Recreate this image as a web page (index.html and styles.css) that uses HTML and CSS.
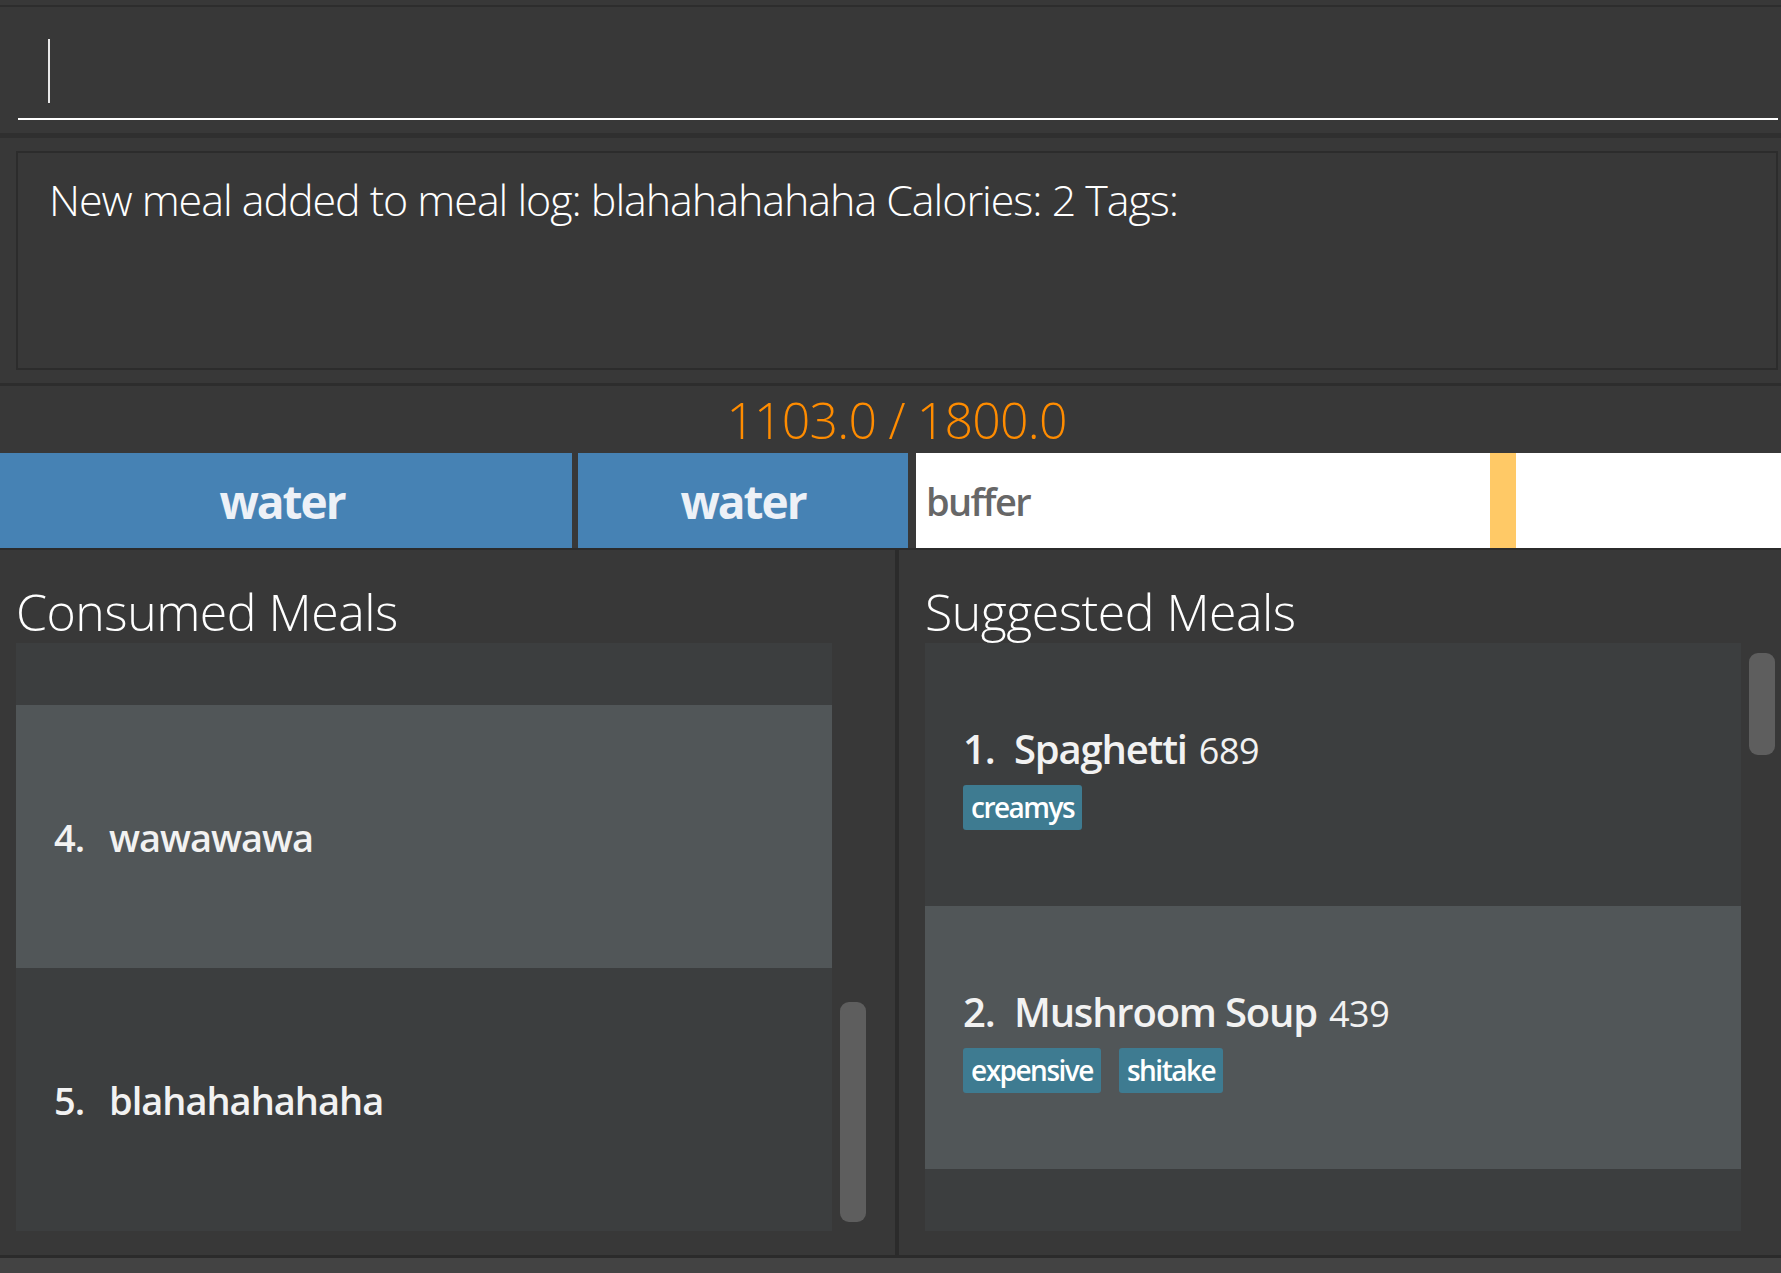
FILE: index.html
```html
<!DOCTYPE html>
<html lang="en">
<head>
<meta charset="utf-8">
<title>Meal log</title>
<link rel="stylesheet" href="styles.css">
</head>
<body>
<div class="app">
  <div class="command-pane">
    <div class="command-field"><span class="caret"></span></div>
  </div>
  <div class="result-pane">
    <div class="result-box">New meal added to meal log: blahahahahaha Calories: 2 Tags:</div>
  </div>
  <div class="calorie-pane"><span class="calorie-text">1103.0 / 1800.0</span></div>
  <div class="bar">
    <div class="seg seg-meal seg-first">water</div>
    <div class="seg seg-meal seg-second">water</div>
    <div class="seg seg-buffer">
      <span class="buffer-label">buffer</span>
      <span class="buffer-marker"></span>
      <span class="buffer-rest"></span>
    </div>
  </div>
  <div class="panels">
    <section class="panel panel-left">
      <h2 class="panel-title">Consumed Meals</h2>
      <div class="list-wrap">
        <div class="list list-consumed">
          <div class="cell cell-even cell-partial"></div>
          <div class="cell cell-odd">
            <div class="cell-title"><span class="cell-idx">4.</span><span class="cell-name">wawawawa</span></div>
          </div>
          <div class="cell cell-even">
            <div class="cell-title"><span class="cell-idx">5.</span><span class="cell-name">blahahahahaha</span></div>
          </div>
        </div>
        <div class="scrollbar"><div class="thumb thumb-left"></div></div>
      </div>
    </section>
    <div class="divider"></div>
    <section class="panel panel-right">
      <h2 class="panel-title">Suggested Meals</h2>
      <div class="list-wrap">
        <div class="list list-suggested">
          <div class="cell cell-even cell-card">
            <div class="cell-body">
              <div class="cell-title"><span class="cell-idx">1.</span><span class="cell-name">Spaghetti</span><span class="cell-cal">689</span></div>
              <div class="tags"><span class="tag">creamys</span></div>
            </div>
          </div>
          <div class="cell cell-odd cell-card">
            <div class="cell-body">
              <div class="cell-title"><span class="cell-idx">2.</span><span class="cell-name">Mushroom Soup</span><span class="cell-cal">439</span></div>
              <div class="tags"><span class="tag">expensive</span><span class="tag">shitake</span></div>
            </div>
          </div>
          <div class="cell cell-even cell-partial"></div>
        </div>
        <div class="scrollbar"><div class="thumb thumb-right"></div></div>
      </div>
    </section>
  </div>
  <div class="status"></div>
</div>
</body>
</html>
```
FILE: styles.css
```css
* { box-sizing: border-box; }

html, body {
  margin: 0;
  padding: 0;
  background: #383838;
}

body {
  font-family: "Open Sans", "Noto Sans", "Liberation Sans", sans-serif;
  color: #ffffff;
  width: 1781px;
  height: 1273px;
  overflow: hidden;
}

.app {
  display: flex;
  flex-direction: column;
  height: 1273px;
  padding-top: 5px;
}

/* command box */
.command-pane {
  height: 133px;
  flex: none;
  border-top: 2px solid #2d2d2d;
  border-bottom: 5px solid #2f2f2f;
  padding: 0 3px 0 18px;
}

.command-field {
  height: 113px;
  border-bottom: 2px solid #ffffff;
  padding: 32px 0 0 30px;
}

.caret {
  display: block;
  width: 2px;
  height: 64px;
  background: #e8e8e8;
}

/* result display */
.result-pane {
  height: 248px;
  flex: none;
  padding: 13px 3px 0 16px;
  border-bottom: 3px solid #2d2d2d;
}

.result-box {
  height: 219px;
  border: 2px solid #2c2c2c;
  padding: 21px 20px 0 31px;
  font-weight: 300;
  font-size: 43px;
  line-height: 1.2;
  letter-spacing: -1.05px;
  color: #ffffff;
}

/* calorie summary */
.calorie-pane {
  height: 67px;
  flex: none;
  text-align: center;
  padding-top: 1px;
}

.calorie-text {
  font-weight: 300;
  font-size: 50px;
  line-height: 66px;
  letter-spacing: -0.8px;
  color: #ff8c00;
  padding-left: 12px;
}

/* stacked calorie bar */
.bar {
  display: flex;
  height: 97px;
  flex: none;
  border-bottom: 2px solid #2b2b2b;
}

.seg {
  height: 95px;
  display: flex;
  align-items: center;
}

.seg-meal {
  background: #4682b4;
  justify-content: center;
  font-weight: 700;
  font-size: 46px;
  letter-spacing: -2px;
  color: #edf1f7;
}

.seg-first {
  width: 572px;
  margin-right: 6px;
  padding-right: 8px;
}

.seg-second {
  width: 330px;
  margin-right: 8px;
}

.seg-buffer {
  flex: 1;
  background: #ffffff;
  align-items: stretch;
}

.buffer-label {
  flex: 1;
  display: flex;
  align-items: center;
  padding-left: 10px;
  font-size: 38px;
  font-weight: 600;
  letter-spacing: -1.6px;
  color: #676767;
}

.buffer-marker {
  width: 26px;
  background: #ffc966;
}

.buffer-rest {
  width: 265px;
}

/* meal panels */
.panels {
  display: flex;
  height: 705px;
  flex: none;
}

.panel {
  display: flex;
  flex-direction: column;
}

.panel-left {
  width: 895px;
  padding-left: 16px;
}

.divider {
  width: 4px;
  background: #2b2b2b;
}

.panel-right {
  flex: 1;
  padding-left: 26px;
}

.panel-title {
  margin: 37px 0 6px 0;
  font-size: 50px;
  font-weight: 300;
  line-height: 50px;
  letter-spacing: -0.5px;
  color: #ffffff;
}

.list-wrap {
  display: flex;
  gap: 8px;
  height: 588px;
}

.list {
  width: 816px;
  display: flex;
  flex-direction: column;
  overflow: hidden;
}

.cell {
  height: 263px;
  flex: none;
  display: flex;
  align-items: center;
  padding-left: 38px;
}

.cell-partial {
  height: 62px;
}

.cell-even { background: #3c3e3f; }
.cell-odd { background: #515658; }

.cell-card {
  padding-top: 6px;
}

.cell-title {
  font-size: 40px;
  font-weight: 600;
  line-height: 48px;
  letter-spacing: -1.2px;
  color: #f2f2f2;
  white-space: nowrap;
}

.list-consumed .cell-title {
  font-size: 38px;
  letter-spacing: -1px;
}

.cell-idx {
  display: inline-block;
  width: 55px;
}

.list-suggested .cell-idx {
  width: 51px;
}

.cell-cal {
  margin-left: 12px;
  font-size: 36px;
  font-weight: 400;
  letter-spacing: -0.4px;
}

.tags {
  display: flex;
  gap: 18px;
  margin-top: 10px;
}

.tag {
  height: 45px;
  padding: 0 8px;
  border-radius: 3px;
  background: #3e7b91;
  font-size: 28px;
  font-weight: 600;
  line-height: 45px;
  letter-spacing: -1.5px;
  color: #ffffff;
}

.scrollbar {
  width: 26px;
  display: flex;
  flex-direction: column;
}

.thumb {
  background: #5e5e5e;
  border-radius: 9px;
}

.thumb-left {
  margin-top: 359px;
  height: 220px;
}

.thumb-right {
  margin-top: 10px;
  height: 102px;
}

/* status bar */
.status {
  flex: 1;
  border-top: 3px solid #2b2b2b;
  background: #434343;
}
```
